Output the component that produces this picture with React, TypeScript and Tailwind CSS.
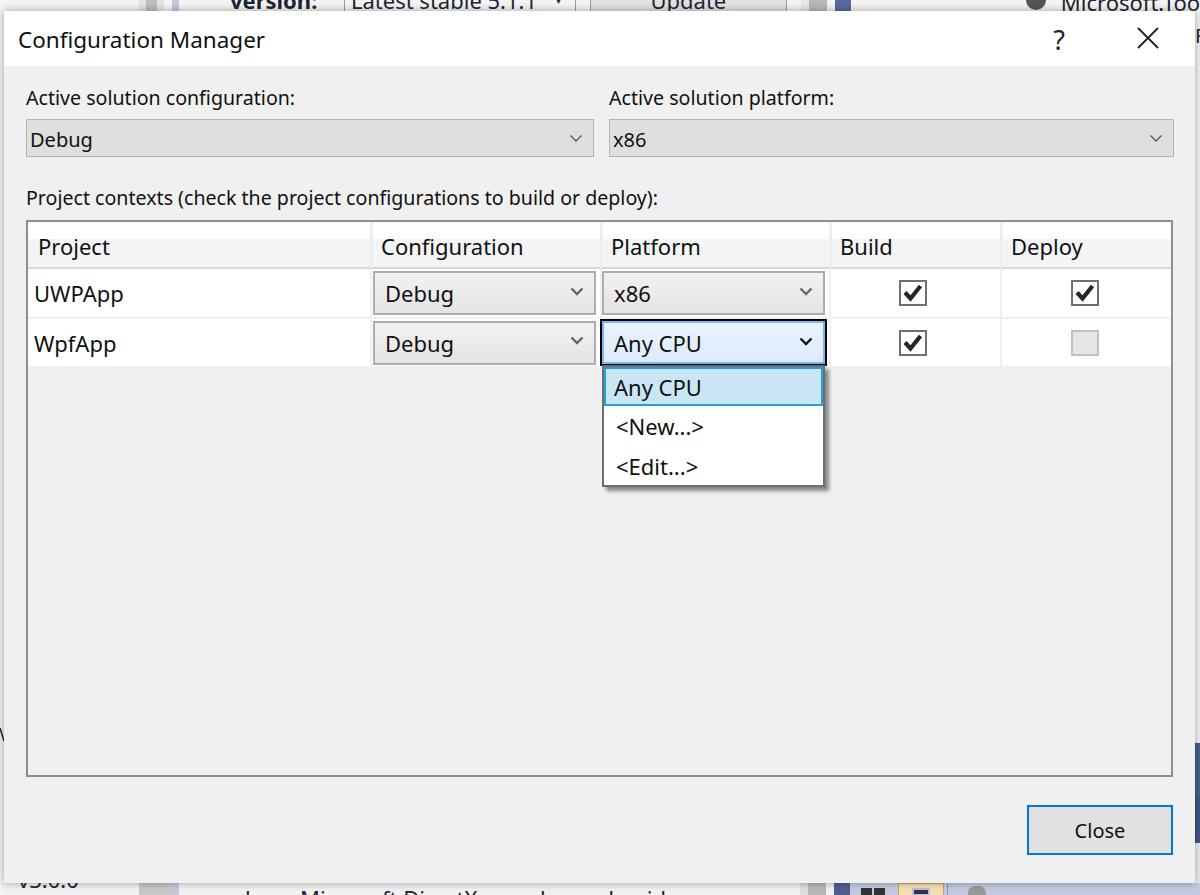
const FONT = "font-['Noto_Sans','Open_Sans',sans-serif]";

function Chevron({ bold, color }: { bold?: boolean; color: string }) {
  return (
    <svg width="14" height="9" viewBox="0 0 14 9" fill="none" className="shrink-0">
      <path d="M1.5 1.5 7 7l5.500-5.500" stroke={color} strokeWidth={bold ? 2.4 : 1.3} />
    </svg>
  );
}

function TopCombo({ value }: { value: string }) {
  return (
    <div className="flex h-[38px] items-center justify-between border border-[#b4b4b4] bg-[#dfdfdf] pl-[3px] pr-[10px] text-[20px] text-[#111]">
      <span className="pt-[3px]">{value}</span>
      <Chevron color="#555" />
    </div>
  );
}

function CellCombo({ value }: { value: string }) {
  return (
    <div className="flex h-[44px] w-[223px] items-center justify-between border-2 border-[#adadad] bg-gradient-to-b from-[#f2f2f2] to-[#e4e4e4] pl-[10px] pr-[10px] text-[22px] text-[#111]">
      <span>{value}</span>
      <span className="-mt-[4px]">
        <Chevron bold color="#666" />
      </span>
    </div>
  );
}

function Check({ on, disabled }: { on?: boolean; disabled?: boolean }) {
  return (
    <div
      className={
        disabled
          ? "h-[26px] w-[28px] border-2 border-[#c0c0c0] bg-[#e6e6e6]"
          : "flex h-[26px] w-[28px] items-center justify-center border-2 border-[#707070] bg-white"
      }
    >
      {on && (
        <svg width="20" height="18" viewBox="0 0 20 18" fill="none">
          <path d="M2 8.500 7.500 14.500 17.500 2" stroke="#262626" strokeWidth="4.200" />
        </svg>
      )}
    </div>
  );
}

function HeaderCell({ label, first }: { label: string; first?: boolean }) {
  return (
    <div
      className={`flex h-[47px] items-center border-b-2 border-[#d6d7da] bg-gradient-to-b from-white from-[38%] to-[#f3f4f6] to-[38%] pt-[2px] text-[22px] text-[#111] ${
        first ? "pl-[10px]" : "border-l-[3px] border-l-[#eeeef0] pl-[8px]"
      }`}
    >
      {label}
    </div>
  );
}

function Row({
  name,
  config,
  platform,
  build,
  deploy,
}: {
  name: string;
  config: React.ReactNode;
  platform: React.ReactNode;
  build: React.ReactNode;
  deploy: React.ReactNode;
}) {
  const cell = "flex items-center border-l-2 border-[#f0f0f0] bg-white";
  return (
    <>
      <div className="flex items-center bg-white pl-[6px] text-[22px] text-[#111]">{name}</div>
      <div className={`${cell} pl-[1px]`}>{config}</div>
      <div className={cell}>{platform}</div>
      <div className={`${cell} justify-center pr-[6px]`}>{build}</div>
      <div className={`${cell} justify-center pr-[4px]`}>{deploy}</div>
    </>
  );
}

function OpenCombo() {
  return (
    <div className="relative z-10 -ml-[2px] -mr-[1px] h-[47px] w-[227px] border-2 border-black">
      <div className="flex h-full items-center justify-between border-2 border-[#7db5ec] bg-gradient-to-b from-[#eaf3fc] to-[#dcebfc] pl-[10px] pr-[10px] text-[22px] text-[#111]">
        <span>Any CPU</span>
        <span className="-mt-[2px]">
          <Chevron bold color="#111" />
        </span>
      </div>
      <div className="absolute left-0 top-[44px] w-[223px] border-2 border-[#6d6d6d] bg-white text-[22px] text-[#111] shadow-[4px_4px_4px_rgba(0,0,0,0.45)]">
        <div className="flex h-[39px] items-center border-2 border-[#26a0da] bg-[#c9e6f5] pl-[8px]">Any CPU</div>
        <div className="flex h-[40px] items-center pl-[12px]">&lt;New...&gt;</div>
        <div className="flex h-[39px] items-center pl-[12px]">&lt;Edit...&gt;</div>
      </div>
    </div>
  );
}

export default function App() {
  return (
    <div className={`${FONT} flex h-[895px] w-[1200px] flex-col overflow-hidden bg-white`}>
      {/* the window behind the dialog, top edge */}
      <div className="flex h-[11px] shrink-0 overflow-hidden bg-[#f4f4f4] text-[22px] leading-[22px] text-[#1c2433]">
        <div className="w-[139px]" />
        <div className="w-[25px] border-x-[7px] border-[#e4e4e4] bg-[#bdbdbd]" />
        <div className="ml-[8px] w-[7px] bg-[#c5c9dd]" />
        <div className="ml-[51px] w-[88px] -mt-[11px] font-bold">version:</div>
        <div className="ml-[26px] flex w-[232px] -mt-[11px] justify-between border-x border-[#9a9a9a] px-[6px] pr-[14px]">
          <span>Latest stable 5.1.1</span>
          <span className="text-[10px]">▾</span>
        </div>
        <div className="ml-[14px] w-[197px] -mt-[11px] border-x border-[#9a9a9a] bg-[#e2e2e2] text-center">Update</div>
        <div className="ml-[14px] w-[8px] bg-[#e8e8e8]" />
        <div className="w-[18px] bg-[#b8b8b8]" />
        <div className="ml-[8px] w-[16px] bg-[#5a6a9c]" />
        <div className="ml-[175px] h-[10px] w-[20px] rounded-b-full bg-[#555]" />
        <div className="ml-[15px] -mt-[9px] whitespace-nowrap">Microsoft.Too</div>
      </div>

      <div className="flex h-[872px] shrink-0">
        <div className="w-[4px] shrink-0 bg-[#f4f4f4] pt-[716px]">
          <svg width="4" height="16" viewBox="0 0 4 16" fill="none">
            <path d="M0 1l4 13" stroke="#222" strokeWidth="1.500" />
          </svg>
        </div>
        <div className="relative z-10 flex w-[1191px] shrink-0 flex-col bg-[#f0f0f0] shadow-[0_0_8px_rgba(0,0,0,0.35)]">
          <div className="flex h-[55px] shrink-0 items-center bg-white pl-[14px] pt-[3px] text-[22.500px] text-[#111]">
            <span>Configuration Manager</span>
            <span className="ml-auto text-[27px] text-[#222]">?</span>
            <svg width="22" height="22" viewBox="0 0 22 22" fill="none" className="ml-[72px] mr-[36px] -mt-[4px]">
              <path d="M1 1l20 20M21 1 1 21" stroke="#222" strokeWidth="1.800" />
            </svg>
          </div>

          <div className="flex flex-1 flex-col px-[22px] text-[19.600px] leading-[24px] text-[#111]">
            <div className="mt-[20px] grid grid-cols-[568px_565px] gap-x-[15px]">
              <div>
                <div>Active solution configuration:</div>
                <div className="mt-[9px]">
                  <TopCombo value="Debug" />
                </div>
              </div>
              <div>
                <div>Active solution platform:</div>
                <div className="mt-[9px]">
                  <TopCombo value="x86" />
                </div>
              </div>
            </div>

            <div className="mt-[29px]">Project contexts (check the project configurations to build or deploy):</div>

            <div className="mt-[10px] h-[557px] w-[1147px] border-2 border-[#8b8e98]">
              <div className="grid grid-cols-[342px_230px_229px_171px_171px] grid-rows-[47px_48px_2px_47px]">
                <HeaderCell first label="Project" />
                <HeaderCell label="Configuration" />
                <HeaderCell label="Platform" />
                <HeaderCell label="Build" />
                <HeaderCell label="Deploy" />
                <Row
                  name="UWPApp"
                  config={<CellCombo value="Debug" />}
                  platform={<CellCombo value="x86" />}
                  build={<Check on />}
                  deploy={<Check on />}
                />
                <div className="col-span-5 bg-[#f0f0f0]" />
                <Row
                  name="WpfApp"
                  config={<CellCombo value="Debug" />}
                  platform={<OpenCombo />}
                  build={<Check on />}
                  deploy={<Check disabled />}
                />
              </div>
            </div>

            <div className="mt-[28px] flex justify-end">
              <button className="h-[50px] w-[146px] border-2 border-[#0078d7] bg-[#e1e1e1] pt-[2px] text-[20px] text-[#111]">
                Close
              </button>
            </div>
          </div>
        </div>
        <div className="flex w-[5px] shrink-0 flex-col bg-[#f4f4f4]">
          <div className="mt-[15px] text-[20px] leading-[20px] text-[#222]">F</div>
          <div className="mt-[697px] h-[55px] bg-[#4a5f8c]" />
          <div className="h-[45px] bg-[#3f5586]" />
          <div className="flex-1 bg-[#ececf2]" />
        </div>
      </div>

      {/* the window behind the dialog, bottom edge */}
      <div className="flex h-[12px] shrink-0 overflow-hidden bg-[#f2f2f2] text-[22px] leading-[22px] text-[#1c2433]">
        <div className="w-[139px] pl-[18px] -mt-[15px]">v3.0.0</div>
        <div className="w-[33px] bg-[#c8c8c8]" />
        <div className="w-[7px] bg-[#c5c9dd]" />
        <div className="ml-[66px] mt-[4px] w-[55px]">l</div>
        <div className="mt-[4px] whitespace-nowrap">Microsoft DirectX samples and guide</div>
        <div className="ml-auto w-[8px] bg-[#dedede]" />
        <div className="w-[18px] bg-[#b8b8b8]" />
        <div className="ml-[8px] w-[16px] bg-[#4f5f92]" />
        <div className="flex w-[350px] bg-[#c3cbe2]">
          <div className="ml-[11px] mt-[5px] flex h-[7px] w-[24px] gap-[2px]">
            <span className="w-[11px] bg-[#333]" />
            <span className="w-[11px] bg-[#333]" />
          </div>
          <div className="ml-[13px] w-[46px] border-x border-t border-[#c9a468] bg-[#f5dfb5] pl-[13px] pt-[4px]">
            <div className="h-[8px] w-[18px] border-2 border-[#b9bce8] bg-[#333]" />
          </div>
          <div className="ml-[3px] w-px bg-[#8d97b5]" />
          <div className="ml-[20px] mt-[3px] h-[14px] w-[18px] rounded-full bg-[#9a9a9a]" />
        </div>
      </div>
    </div>
  );
}
